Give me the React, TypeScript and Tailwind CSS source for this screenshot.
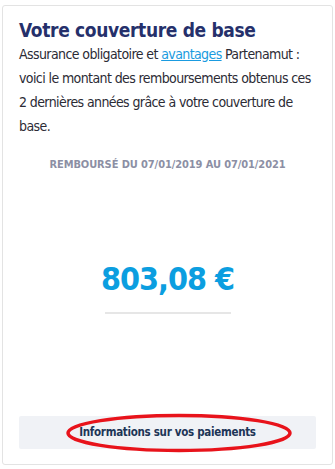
export default function App() {
  return (
    <div
      className="h-[469px] w-[335px] bg-white px-[2px] pb-[4px] pt-[5px]"
      style={{ fontFamily: '"Liberation Sans Narrow", "DejaVu Sans Condensed", "Liberation Sans", sans-serif' }}
    >
      {/* Card */}
      <div className="flex h-full flex-col rounded-[3px] border border-[#e3e3e3] px-[16px] pb-[15px] pt-[12px]">
        <h2 className="text-[19px] font-bold leading-[24px] tracking-[-0.35px] text-[#25306b]">
          Votre couverture de base
        </h2>
        <p className="text-[14px] leading-[24px] tracking-[-0.6px] text-[#2b2b35]">
          Assurance obligatoire et{" "}
          <a href="#" className="text-[#1a9be0] underline">
            avantages
          </a>{" "}
          Partenamut : voici le montant des remboursements obtenus ces 2
          dernières années grâce à votre couverture de base.
        </p>

        <p className="mt-[19px] text-center text-[11px] font-bold tracking-[-0.1px] text-[#8c8fa4]">
          REMBOURSÉ DU 07/01/2019 AU 07/01/2021
        </p>

        <div className="mt-[85px] flex flex-col items-center">
          <span className="text-[32px] font-bold leading-[40px] tracking-[-1px] text-[#0b9ee0]">
            803,08 €
          </span>
          <div className="mt-[13px] h-[2px] w-[126px] bg-[#e6e6e6]" />
        </div>

        <div className="relative mt-auto">
          <button className="flex h-[33px] w-full items-center justify-center rounded-[2px] bg-[#f0f2f6] text-[11.5px] font-bold tracking-[-0.3px] text-[#1d3557]">
            Informations sur vos paiements
          </button>
          {/* red annotation */}
          <svg
            className="pointer-events-none absolute left-[46px] top-[-3px]"
            width="228"
            height="40"
            viewBox="0 0 228 40"
          >
            <ellipse cx="114" cy="20" rx="111" ry="17.5" fill="none" stroke="#e8131b" strokeWidth="3.5" />
          </svg>
        </div>
      </div>
    </div>
  );
}
